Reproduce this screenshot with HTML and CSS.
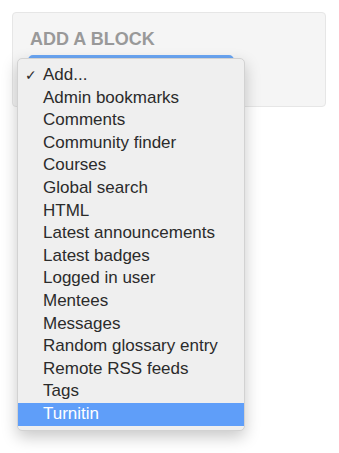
FILE: index.html
```html
<!DOCTYPE html>
<html lang="en">
<head>
    <meta charset="UTF-8">
    <meta name="viewport" content="width=device-width, initial-scale=1.0">
    <title>Add a block</title>
    <link rel="stylesheet" href="styles.css">
</head>
<body>
    <div class="block-card">
        <h2 class="block-title">ADD A BLOCK</h2>
        <div class="select-wrap">
            <div class="select-box"></div>
            <ul class="dropdown">
                <li class="option checked">Add...</li>
                <li class="option">Admin bookmarks</li>
                <li class="option">Comments</li>
                <li class="option">Community finder</li>
                <li class="option">Courses</li>
                <li class="option">Global search</li>
                <li class="option">HTML</li>
                <li class="option">Latest announcements</li>
                <li class="option">Latest badges</li>
                <li class="option">Logged in user</li>
                <li class="option">Mentees</li>
                <li class="option">Messages</li>
                <li class="option">Random glossary entry</li>
                <li class="option">Remote RSS feeds</li>
                <li class="option">Tags</li>
                <li class="option active">Turnitin</li>
            </ul>
        </div>
    </div>
</body>
</html>
```

FILE: styles.css
```css
body {
    font-family: 'Liberation Sans', Arial, sans-serif;
    margin: 0;
    min-height: 453px; /* 드롭다운이 잘리지 않도록 */
    background-color: #fff;
    color: #333;
}

.block-card {
    margin: 12px 0 0 12px;
    width: 314px;
    height: 95px;
    box-sizing: border-box;
    padding: 16px 15px;
    background-color: #f5f5f5;
    border: 1px solid #e6e6e6;
    border-radius: 4px;
}

.block-title {
    margin: 0 0 6px 2px;
    font-size: 18px;
    line-height: 20px;
    font-weight: 700;
    color: #999;
}

.select-wrap {
    position: relative; /* 드롭다운 기준점 */
}

.select-box {
    width: 206px;
    height: 30px;
    box-sizing: border-box;
    border: 3px solid #6aa6f4;
    border-radius: 5px;
    background-color: #fff;
}

.dropdown {
    position: absolute;
    top: 3px;
    left: -11px;
    z-index: 10;
    width: 228px;
    margin: 0;
    padding: 5px 0 4px;
    list-style: none;
    background-color: #efefef;
    border: 1px solid #d2d2d2;
    border-radius: 5px;
    box-sizing: border-box;
    box-shadow: 0 6px 16px rgba(0, 0, 0, 0.22);
}

.option {
    height: 22.6px;
    line-height: 22.6px;
    padding-left: 25px;
    font-size: 17px;
    color: #2b2b2b;
    white-space: nowrap;
    position: relative;
}

.option.checked::before {
    content: "\2713";
    position: absolute;
    left: 7px;
    font-size: 14px;
    font-weight: 700;
    font-family: 'DejaVu Sans', sans-serif;
}

.option.active {
    background-color: #5f9ef9;
    color: #fff;
}
```
